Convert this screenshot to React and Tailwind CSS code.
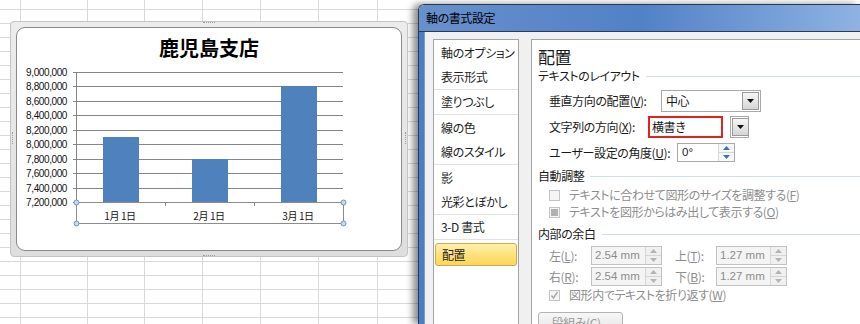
import React from 'react';

const jp = "font-['Noto_Sans_CJK_JP',sans-serif] [font-feature-settings:'palt'] tracking-[-0.4px]";

const yLabels = ['9,000,000', '8,800,000', '8,600,000', '8,400,000', '8,200,000', '8,000,000', '7,800,000', '7,600,000', '7,400,000', '7,200,000'];
const bars = [
  { label: '1月 1日', value: 8100000 },
  { label: '2月 1日', value: 7800000 },
  { label: '3月 1日', value: 8800000 },
];

const navGroups = [
  ['軸のオプション', '表示形式'],
  ['塗りつぶし'],
  ['線の色', '線のスタイル'],
  ['影', '光彩とぼかし'],
  ['3-D 書式'],
];

const Chart = () => {
  const top = 10;
  const h = 130;
  const yOf = (v) => top + ((9000000 - v) / 1800000) * h;
  return (
    <svg width="386" height="170" className="block">
      {yLabels.map((l, i) => {
        const y = Math.round(top + (i * h) / 9) + 0.5;
        return (
          <g key={l}>
            <line x1="56" x2="326" y1={y} y2={y} stroke="#868686" strokeWidth="1" />
            <text x="50" y={y + 3.5} textAnchor="end" fontSize="10" fontFamily="Liberation Sans, sans-serif" fill="#111">
              {l}
            </text>
          </g>
        );
      })}
      <line x1="59.5" x2="59.5" y1="10" y2="141" stroke="#868686" />
      {bars.map((b, i) => {
        const x = 86 + i * 89;
        const y = Math.round(yOf(b.value));
        return (
          <g key={b.label}>
            <rect x={x} y={y} width="36" height={140 - y} fill="#4f81bd" />
            <text x={x + 17} y="157.5" textAnchor="middle" fontSize="10" fontFamily="Noto Sans CJK JP, sans-serif" fill="#111">
              {b.label}
            </text>
          </g>
        );
      })}
      <line x1="148.5" x2="148.5" y1="140" y2="144" stroke="#868686" />
      <line x1="237.5" x2="237.5" y1="140" y2="144" stroke="#868686" />
      <rect x="59.5" y="140.5" width="267" height="21" fill="none" stroke="#8c8c8c" />
      {[[59.5, 140.5], [326.5, 140.5], [59.5, 161.5], [326.5, 161.5]].map(([cx, cy]) => (
        <circle key={`${cx}-${cy}`} cx={cx} cy={cy} r="2.5" fill="#c9d7e6" stroke="#7393b7" />
      ))}
    </svg>
  );
};

const SectionHead = ({ label, className }) => (
  <div className={`flex items-center h-[14px] text-[12px] leading-[14px] text-[#1a1a1a] ${className}`}>
    <span>{label}</span>
    <div className="flex-1 h-px bg-[#d3dde8] ml-[6px]" />
  </div>
);

const DropButton = () => (
  <div className="w-[17px] h-full bg-gradient-to-b from-[#f6f6f6] to-[#d6d6d6] border border-[#9a9a9a] flex items-center justify-center">
    <svg width="7" height="4" viewBox="0 0 7 4">
      <path d="M0 0h7L3.5 4z" fill="#111" />
    </svg>
  </div>
);

const Spinner = ({ disabled }) => (
  <div className="w-[16px] h-full flex flex-col border-l border-[#d6d6d6]">
    <div className={`flex-1 flex items-center justify-center border-b border-[#d6d6d6] ${disabled ? 'bg-[#f0f0f0]' : 'bg-[#f4f7fb]'}`}>
      <svg width="7" height="4" viewBox="0 0 7 4">
        <path d="M0 4h7L3.5 0z" fill={disabled ? '#b4b4b4' : '#4b6fa3'} />
      </svg>
    </div>
    <div className={`flex-1 flex items-center justify-center ${disabled ? 'bg-[#f0f0f0]' : 'bg-[#f4f7fb]'}`}>
      <svg width="7" height="4" viewBox="0 0 7 4">
        <path d="M0 0h7L3.5 4z" fill={disabled ? '#b4b4b4' : '#4b6fa3'} />
      </svg>
    </div>
  </div>
);

const MarginBox = ({ value }) => (
  <div className="w-[71px] h-[19px] border border-[#c2c2c2] bg-[#f4f4f4] flex">
    <span className="flex-1 pl-[3px] font-['Liberation_Sans',sans-serif] tracking-normal text-[11.5px] leading-[17px] text-[#8d8d8d]">{value}</span>
    <Spinner disabled />
  </div>
);

const CheckRow = ({ children, state, className }) => (
  <div className={`flex items-center h-[14px] pl-[11px] ${className}`}>
    <div className="w-[11px] h-[11px] border border-[#c4c4c4] bg-[#f5f5f5] flex items-center justify-center">
      {state === 'mixed' && <div className="w-[7px] h-[7px] bg-[#b0b0b0]" />}
      {state === 'checked' && (
        <svg width="9" height="9" viewBox="0 0 9 9">
          <path d="M1.5 4.5l2 2.5 4-6" fill="none" stroke="#a8a8a8" strokeWidth="1.4" />
        </svg>
      )}
    </div>
    <span className="ml-[9px] text-[12px] leading-[14px] text-[#8d8d8d]">{children}</span>
  </div>
);

const App = () => {
  return (
    <div className={`w-[860px] h-[324px] overflow-hidden flex bg-white bg-[image:repeating-linear-gradient(to_bottom,transparent_0px,transparent_9px,#d9d9d9_9px,#d9d9d9_10px,transparent_10px,transparent_14px),linear-gradient(to_right,transparent_20px,#d9d9d9_20px,#d9d9d9_21px,transparent_21px,transparent_87px,#d9d9d9_87px,#d9d9d9_88px,transparent_88px,transparent_144px,#d9d9d9_144px,#d9d9d9_145px,transparent_145px,transparent_202px,#d9d9d9_202px,#d9d9d9_203px,transparent_203px,transparent_260px,#d9d9d9_260px,#d9d9d9_261px,transparent_261px,transparent_318px,#d9d9d9_318px,#d9d9d9_319px,transparent_319px,transparent_377px,#d9d9d9_377px,#d9d9d9_378px,transparent_378px)] ${jp}`}>
      {/* chart object */}
      <div className="shrink-0 ml-[10px] mt-[21px] w-[398px] h-[236px] relative rounded-[4px] border border-[#c4c4c4] bg-gradient-to-b from-[#ececec] to-[#dedede] p-[5px]">
        <div className="absolute left-[192px] top-[0px] w-[12px] border-t border-dotted border-[#9a9a9a]" />
        <div className="absolute left-[192px] bottom-[0px] w-[12px] border-t border-dotted border-[#9a9a9a]" />
        <div className="absolute left-[1px] top-[110px] h-[12px] border-l border-dotted border-[#9a9a9a]" />
        <div className="absolute right-[1px] top-[110px] h-[12px] border-l border-dotted border-[#9a9a9a]" />
        <div className="h-full rounded-[9px] border border-[#8a8a8a] bg-white">
          <div className="h-[34px] pt-[10px] text-center text-[20px] leading-[20px] font-bold tracking-normal text-black">鹿児島支店</div>
          <Chart />
        </div>
      </div>

      {/* dialog */}
      <div className="ml-[10px] mt-[4px] flex-1 flex flex-col border-l border-t border-[#27384f] rounded-tl-[6px] overflow-hidden shadow-[-5px_0_7px_rgba(0,0,0,0.45)]">
        <div className="h-[27px] shrink-0 border-b border-[#2b3d56] bg-gradient-to-r from-[#6890cc] via-[#5181c6] to-[#8fb2e2] flex items-center pl-[7px] text-[12px] text-black">
          軸の書式設定
        </div>
        <div className="flex-1 flex">
          <div className="w-[6px] bg-[#4c7cc3] border-r border-[#7f9cc6]" />
          <div className="flex-1 flex bg-[#f0f0f0] pl-[8px] pt-[7px]">
            <div className="w-[86px] border border-[#a3a3a3] bg-white text-[12px] text-[#1e1e1e]">
              {navGroups.map((g) =>
                g.map((item, i) => (
                  <div
                    key={item}
                    className={`h-[25px] flex items-center pl-[7px] ${i === g.length - 1 ? 'border-b border-[#e2e2e2]' : ''}`}
                  >
                    {item}
                  </div>
                ))
              )}
              <div className="mt-[3px] mx-[1px] h-[23px] rounded-[3px] border border-[#cfa94c] bg-gradient-to-b from-[#fff0ad] via-[#fee27a] to-[#fcd65a] flex items-center pl-[6px]">
                配置
              </div>
            </div>

            <div className="ml-[12px] flex-1 bg-white border-l border-t border-[#a3a3a3] pl-[6px] pt-[8px] text-[12px] text-[#1a1a1a]">
              <div className="text-[17px] leading-[18px]">配置</div>
              <SectionHead label="テキストのレイアウト" className="mt-[3px]" />

              <div className="mt-[7px] flex items-center h-[22px] pl-[11px]">
                <span className="w-[112px]">垂直方向の配置(<u>V</u>):</span>
                <div className="w-[100px] h-[22px] border border-[#a9a9a9] flex p-[1px]">
                  <span className="flex-1 pl-[3px] leading-[18px]">中心</span>
                  <DropButton />
                </div>
              </div>

              <div className="mt-[4px] flex items-center h-[22px] pl-[11px]">
                <span className="w-[99px]">文字列の方向(<u>X</u>):</span>
                <div className="w-[75px] h-[22px] border-2 border-[#e3211f] pl-[2px] leading-[18px]">横書き</div>
                <div className="ml-[7px] w-[19px] h-[22px] border border-[#a9a9a9] p-[1px]">
                  <DropButton />
                </div>
              </div>

              <div className="mt-[5px] flex items-center h-[19px] pl-[11px]">
                <span className="w-[128px]">ユーザー設定の角度(<u>U</u>):</span>
                <div className="w-[58px] h-[19px] border border-[#a9a9a9] flex">
                  <span className="flex-1 pl-[4px] font-['Liberation_Sans',sans-serif] tracking-normal text-[11.5px] leading-[17px]">0°</span>
                  <Spinner />
                </div>
              </div>

              <SectionHead label="自動調整" className="mt-[7px]" />
              <CheckRow className="mt-[5px]">テキストに合わせて図形のサイズを調整する(<u>F</u>)</CheckRow>
              <CheckRow className="mt-[3px]" state="mixed">テキストを図形からはみ出して表示する(<u>O</u>)</CheckRow>

              <SectionHead label="内部の余白" className="mt-[8px]" />
              <div className="mt-[5px] flex items-center h-[19px] pl-[11px] text-[#8d8d8d]">
                <span className="w-[42px]">左(<u>L</u>):</span>
                <MarginBox value="2.54 mm" />
                <span className="ml-[13px] w-[41px]">上(<u>T</u>):</span>
                <MarginBox value="1.27 mm" />
              </div>
              <div className="mt-[2px] flex items-center h-[19px] pl-[11px] text-[#8d8d8d]">
                <span className="w-[42px]">右(<u>R</u>):</span>
                <MarginBox value="2.54 mm" />
                <span className="ml-[13px] w-[41px]">下(<u>B</u>):</span>
                <MarginBox value="1.27 mm" />
              </div>
              <CheckRow className="mt-[2px]" state="checked">図形内でテキストを折り返す(<u>W</u>)</CheckRow>

              <div className="mt-[10px] w-[85px] h-[22px] rounded-[3px] border border-[#b3b3b3] bg-gradient-to-b from-[#f7f7f7] to-[#e4e4e4] flex items-center justify-center text-[#9a9a9a]">
                段組み(C)...
              </div>
            </div>
          </div>
        </div>
      </div>
    </div>
  );
};

export default App;
